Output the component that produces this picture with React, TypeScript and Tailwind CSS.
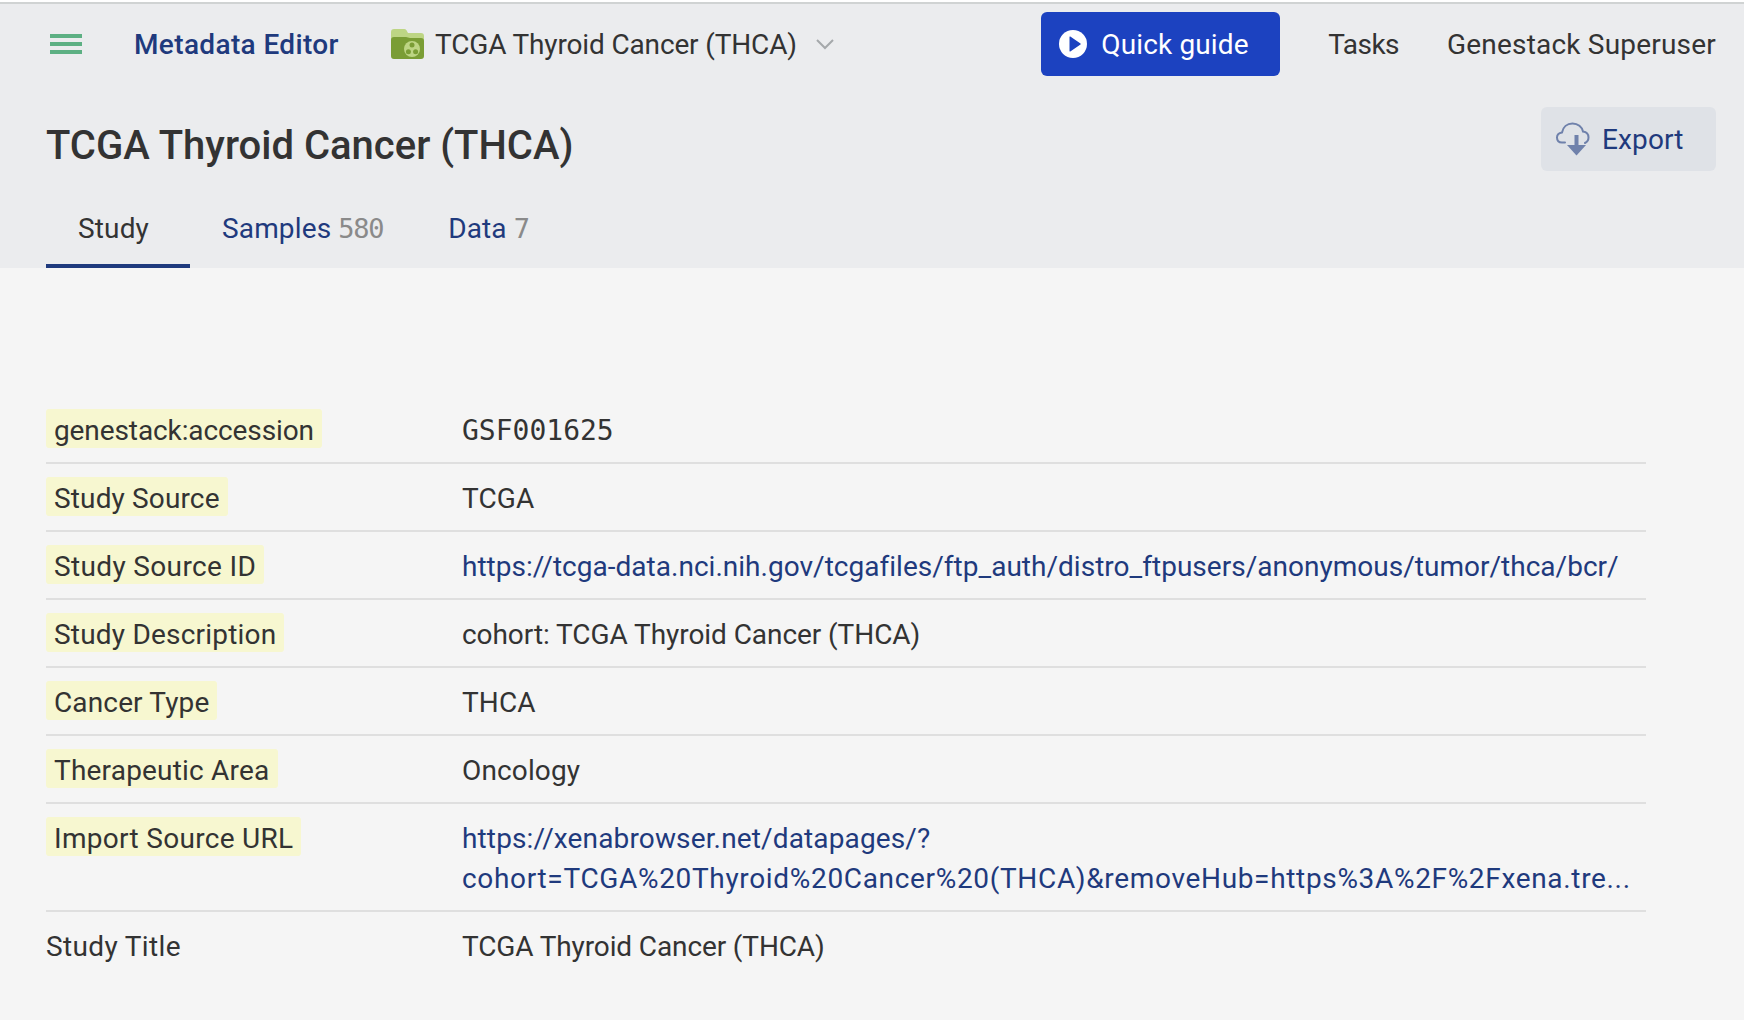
import React from "react";

const sans = "font-['Roboto','Liberation_Sans',sans-serif]";
const navy = "text-[#1f3a7d]";
const mono = "font-['DejaVu_Sans_Mono',monospace]";
const count = `${mono} text-[#8a8a8a] text-[27px] tracking-[-1.3px]`;

function Row({ label, mark = true, children, last = false, labelClass = "" }: { label: string; mark?: boolean; children: React.ReactNode; last?: boolean; labelClass?: string }) {
  return (
    <div className={`flex pt-[13px] pb-[11px] ${last ? "" : "border-b-2 border-[#dfdfdf]"}`}>
      <div className="w-[416px] shrink-0">
        <div className={`w-fit h-[39px] leading-[43px] rounded-[3px] ${mark ? "bg-[#f7f7d0] px-2" : ""} text-[#333] ${labelClass}`}>{label}</div>
      </div>
      <div className="min-w-0 flex-1 pt-[2px] leading-[40px] text-[#333]">{children}</div>
    </div>
  );
}

function Folder() {
  return (
    <svg width="33" height="30" viewBox="0 0 33 30" className="shrink-0">
      <path d="M0 3a3 3 0 0 1 3-3h10a3 3 0 0 1 2.500 1.300L17 4h13a3 3 0 0 1 3 3v6H0z" fill="#bdd584" />
      <path d="M0 11a3 3 0 0 1 3-3h12c1.500 0 2.500 1 4 1h11a3 3 0 0 1 3 3v15a3 3 0 0 1-3 3H3a3 3 0 0 1-3-3z" fill="#7a9d35" />
      <circle cx="21" cy="20" r="8" fill="#bdd584" />
      <circle cx="21" cy="16" r="2.500" fill="#7a9d35" />
      <circle cx="17.400" cy="22.800" r="2.500" fill="#7a9d35" />
      <circle cx="24.600" cy="22.800" r="2.500" fill="#7a9d35" />
    </svg>
  );
}

function CloudDown() {
  return (
    <svg width="36" height="34" viewBox="0 0 36 34" className="shrink-0" fill="none">
      <path d="M10 20.500H7C3.500 20.500 2 18 2 15.500 2 13 4 11 7 10.500 8 5 12 1.500 17.500 1.500 23 1.500 27 5 28 9.500 31.500 10 33.500 12.500 33.500 15.500 33.500 18 32 20 30 21" stroke="#6f81ab" strokeWidth="2" strokeLinecap="round" />
      <path d="M21.500 13v12" stroke="#6f81ab" strokeWidth="4" />
      <path d="M12 23h19l-9.500 10.500z" fill="#6f81ab" />
    </svg>
  );
}

export default function App() {
  return (
    <div className={`${sans} min-h-[1020px] bg-[#f5f5f5] text-[28px] tracking-[0.005em]`}>
      <div className="h-[2px] bg-white" />
      <div className="h-[2px] bg-[#d0d3d3]" />
      <header className="h-[264px] bg-[#ebecee] pl-[46px] pr-[28px] flex flex-col">
        <div className="flex items-center h-[80px]">
          <div className="w-[88px] pl-[4px]">
            <div className="flex flex-col gap-[4px] w-[32px]">
              <div className="h-[4px] bg-[#5db083]" />
              <div className="h-[4px] bg-[#5db083]" />
              <div className="h-[4px] bg-[#5db083]" />
            </div>
          </div>
          <span className={`pt-[2px] font-medium ${navy} w-[257px] tracking-[0.36px]`}>Metadata Editor</span>
          <Folder />
          <span className="pt-[2px] ml-[11px] text-[#333] tracking-[-0.15px]">TCGA Thyroid Cancer (THCA)</span>
          <svg width="20" height="12" viewBox="0 0 20 12" className="ml-[18px]" fill="none"><path d="M2 2l8 8 8-8" stroke="#a5a8ab" strokeWidth="2" /></svg>
          <div className="ml-auto flex items-center h-[64px] w-[239px] rounded-[6px] bg-[#1c42c0] pl-[18px] text-white">
            <svg width="28" height="28" viewBox="0 0 28 28" className="shrink-0"><circle cx="14" cy="14" r="14" fill="#fff" /><path d="M10.500 7a.5.500 0 0 1 .8-.4L21.500 13.600a.5.500 0 0 1 0 .8L11.300 21.400a.5.500 0 0 1-.8-.4z" fill="#1c42c0" /></svg>
            <span className="pt-[2px] ml-[14px]">Quick guide</span>
          </div>
          <span className="pt-[2px] ml-[48px] text-[#333] tracking-[-0.55px]">Tasks</span>
          <span className="pt-[2px] ml-[48px] text-[#333] tracking-[0.2px]">Genestack Superuser</span>
        </div>
        <div className="flex items-start justify-between mt-[23px]">
          <h1 className="text-[40px] leading-[56px] mt-[11px] font-medium text-[#333] tracking-normal">TCGA Thyroid Cancer (THCA)</h1>
          <div className={`flex items-center h-[64px] w-[175px] rounded-[6px] bg-[#dfe2e7] pl-[14px] ${navy}`}>
            <CloudDown />
            <span className="pt-[2px] ml-[11px]">Export</span>
          </div>
        </div>
        <nav className="mt-auto flex">
          <div className="w-[144px] h-[66px] pl-[32px] leading-[54px] border-b-4 border-[#1f3a7d] text-[#333]">Study</div>
          <div className={`ml-[32px] h-[66px] leading-[54px] ${navy}`}>Samples <span className={count}>580</span></div>
          <div className={`ml-[65px] h-[66px] leading-[54px] ${navy}`}>Data <span className={count}>7</span></div>
        </nav>
      </header>
      <main className="ml-[46px] w-[1600px] pt-[128px]">
        <Row label="genestack:accession" labelClass="tracking-[-0.1px]"><span className={`${mono} tracking-normal`}>GSF001625</span></Row>
        <Row label="Study Source">TCGA</Row>
        <Row label="Study Source ID" labelClass="tracking-[0.35px]"><span className={`${navy} tracking-[0.02px]`}>https://tcga-data.nci.nih.gov/tcgafiles/ftp_auth/distro_ftpusers/anonymous/tumor/thca/bcr/</span></Row>
        <Row label="Study Description" labelClass="tracking-[0.2px]"><span className="tracking-[-0.06px]">cohort: TCGA Thyroid Cancer (THCA)</span></Row>
        <Row label="Cancer Type">THCA</Row>
        <Row label="Therapeutic Area" labelClass="tracking-[0.2px]">Oncology</Row>
        <Row label="Import Source URL" labelClass="tracking-[0.3px]">
          <div className={navy}>https://xenabrowser.net/datapages/?</div>
          <div className={`${navy} whitespace-nowrap tracking-[0.67px]`}>cohort=TCGA%20Thyroid%20Cancer%20(THCA)&amp;removeHub=https%3A%2F%2Fxena.tre...</div>
        </Row>
        <Row label="Study Title" mark={false} last labelClass="tracking-[0.35px]"><span className="tracking-[-0.12px]">TCGA Thyroid Cancer (THCA)</span></Row>
      </main>
    </div>
  );
}
